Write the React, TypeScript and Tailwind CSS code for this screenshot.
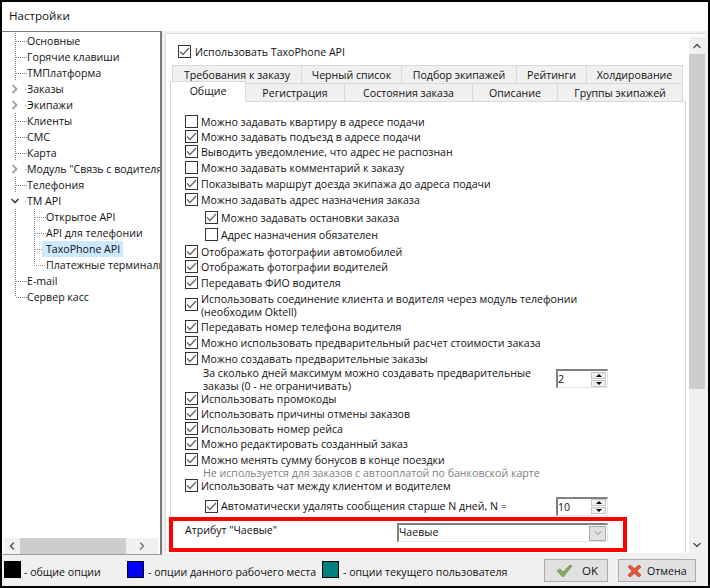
import { ChevronDown, ChevronLeft, ChevronRight, ChevronUp } from "lucide-react";
import type { ReactNode } from "react";

type TreeItem = {
  label: string;
  level?: number;
  arrow?: "right" | "down";
  selected?: boolean;
  last?: boolean;
};

const treeItems: TreeItem[] = [
  { label: "Основные" },
  { label: "Горячие клавиши" },
  { label: "ТМПлатформа" },
  { label: "Заказы", arrow: "right" },
  { label: "Экипажи", arrow: "right" },
  { label: "Клиенты" },
  { label: "СМС" },
  { label: "Карта" },
  { label: 'Модуль "Связь с водителями"', arrow: "right" },
  { label: "Телефония" },
  { label: "TM API", arrow: "down" },
  { label: "Открытое API", level: 1 },
  { label: "API для телефонии", level: 1 },
  { label: "TaxoPhone API", level: 1, selected: true },
  { label: "Платежные терминалы", level: 1, last: true },
  { label: "E-mail" },
  { label: "Сервер касс", last: true },
];

const tabsTop = [
  { label: "Требования к заказу", className: "w-[130px]" },
  { label: "Черный список", className: "w-[100px]" },
  { label: "Подбор экипажей", className: "w-[115px]" },
  { label: "Рейтинги", className: "w-[70px]" },
  { label: "Холдирование", className: "w-[96px]" },
];

const tabsBottom = [
  { label: "Регистрация", className: "w-[99px]" },
  { label: "Состояния заказа", className: "w-[128px]" },
  { label: "Описание", className: "w-[85px]" },
  { label: "Группы экипажей", className: "w-[125px]" },
];

function Check({ checked = true }: { checked?: boolean }) {
  return (
    <span className="flex size-[13px] shrink-0 items-center justify-center border border-[#333333] bg-white">
      {checked && (
        <svg width="11" height="11" viewBox="0 0 11 11" fill="none">
          <path d="M1 5.5 4 8.5 10 2" stroke="#666666" strokeWidth="1.3" />
        </svg>
      )}
    </span>
  );
}

function Row({
  children,
  className,
  checked = true,
  indent = false,
}: {
  children: ReactNode;
  className: string;
  checked?: boolean;
  indent?: boolean;
}) {
  return (
    <div className={`flex items-center gap-[3px] ${indent ? "pl-[34px]" : "pl-[14px]"} ${className}`}>
      <Check checked={checked} />
      <span className="mt-[2px] leading-[13px]">{children}</span>
    </div>
  );
}

function Spinner({ value }: { value: string }) {
  return (
    <div className="flex h-[19px] w-[52px] items-center justify-between border-t-2 border-r border-b border-l-2 border-t-[#808080] border-r-[#e4e4e4] border-b-[#e4e4e4] border-l-[#808080] bg-white pr-[1px] leading-[16px]">
      <span>{value}</span>
      <div className="flex flex-col gap-[1px]">
        <span className="flex h-[7px] w-[15px] items-center justify-center border border-[#c4c4c4] bg-[#f0f0f0]">
          <span className="border-x-[3px] border-b-[3px] border-x-transparent border-b-black" />
        </span>
        <span className="flex h-[7px] w-[15px] items-center justify-center border border-[#c4c4c4] bg-[#f0f0f0]">
          <span className="border-x-[3px] border-t-[3px] border-x-transparent border-t-black" />
        </span>
      </div>
    </div>
  );
}

function TreeLines({ item }: { item: TreeItem }) {
  const level = item.level ?? 0;
  const dotted = { stroke: "#8a8a8a", strokeDasharray: "1 1", fill: "none" };

  return (
    <svg width={level ? 44 : 25} height="16" className="shrink-0">
      {!item.arrow && !(level === 0 && item.last) && <path d="M13.5 0V16" {...dotted} />}
      {level === 0 && item.last && <path d="M13.5 0V8" {...dotted} />}
      {item.arrow === "right" && (
        <path d="M10.5 4 14.5 8 10.5 12" fill="none" stroke="#a6a6a6" strokeWidth="2" />
      )}
      {item.arrow === "down" && (
        <path d="M9.5 6 13 9.5 16.5 6" fill="none" stroke="#404040" strokeWidth="1.6" />
      )}
      {level === 0 && <path d={item.arrow ? "M23 8.5H25" : "M14 8.5H25"} {...dotted} />}
      {level === 1 && <path d={item.last ? "M32.5 0V8.5H44" : "M32.5 0V16M33 8.5H44"} {...dotted} />}
    </svg>
  );
}

function Tree() {
  return (
    <div className="flex w-[160px] shrink-0 flex-col border-t border-r-2 border-b border-t-[#7a7a7a] border-r-[#7a7a7a] border-b-[#a0a0a0] bg-white">
      <div className="flex min-h-0 flex-1 flex-col overflow-hidden pt-[1px]">
        {treeItems.map((item) => (
          <div className="flex h-4 shrink-0 items-center whitespace-nowrap" key={item.label}>
            <TreeLines item={item} />
            <span className={item.selected ? "-ml-[4px] flex h-4 items-center bg-[#cce8ff] pt-[2px] pr-[3px] pl-[4px]" : "mt-[2px]"}>
              {item.label}
            </span>
          </div>
        ))}
      </div>
      <div className="mx-[2px] flex h-[16px] shrink-0 items-center justify-between bg-[#f0f0f0] text-[#555555]">
        <span className="flex w-[16px] justify-center">
          <ChevronLeft size={12} strokeWidth={3} />
        </span>
        <span className="h-full w-[108px] bg-[#cdcdcd]" />
        <span className="flex w-[32px] justify-center">
          <ChevronRight size={12} strokeWidth={3} className="text-[#777777]" />
        </span>
      </div>
    </div>
  );
}

function Tabs() {
  const tabClass =
    "flex h-[18px] items-center justify-center border-t border-r border-[#d9d9d9] bg-[#f0f0f0] first:border-l";

  return (
    <div className="relative z-10 mt-[7px] h-[36px] shrink-0">
      <div className="ml-[6px] flex">
        {tabsTop.map((tab) => (
          <div className={`${tabClass} pt-[2px] ${tab.className}`} key={tab.label}>
            {tab.label}
          </div>
        ))}
      </div>
      <div className="ml-[4px] flex">
        <div className="relative -mt-[2px] flex h-[21px] w-[76px] items-start justify-center border-x border-t border-[#d9d9d9] bg-white pt-[2px]">
          Общие
        </div>
        {tabsBottom.map((tab) => (
          <div className={`${tabClass} pt-[3px] ${tab.className}`} key={tab.label}>
            {tab.label}
          </div>
        ))}
      </div>
    </div>
  );
}

function TabPage() {
  return (
    <div className="relative ml-[4px] flex w-[516px] min-h-0 flex-1 flex-col border-x border-t border-[#d9d9d9] bg-white pt-[11px]">
      <Row className="h-4" checked={false}>Можно задавать квартиру в адресе подачи</Row>
      <Row className="h-[15px]">Можно задавать подъезд в адресе подачи</Row>
      <Row className="h-[15px]">Выводить уведомление, что адрес не распознан</Row>
      <Row className="h-4" checked={false}>Можно задавать комментарий к заказу</Row>
      <Row className="h-4">Показывать маршрут доезда экипажа до адреса подачи</Row>
      <Row className="h-4">Можно задавать адрес назначения заказа</Row>
      <Row className="mt-[2px] h-4" indent>Можно задавать остановки заказа</Row>
      <Row className="mt-[1px] h-4" indent checked={false}>Адрес назначения обязателен</Row>
      <Row className="mt-[1px] h-4">Отображать фотографии автомобилей</Row>
      <Row className="h-[15px]">Отображать фотографии водителей</Row>
      <Row className="h-4">Передавать ФИО водителя</Row>
      <Row className="h-[29px]">
        Использовать соединение клиента и водителя через модуль телефонии
        <br />
        (необходим Oktell)
      </Row>
      <Row className="h-[15px]">Передавать номер телефона водителя</Row>
      <Row className="h-4">Можно использовать предварительный расчет стоимости заказа</Row>
      <Row className="h-4">Можно создавать предварительные заказы</Row>
      <div className="flex h-[25px] items-center justify-between pr-[77px] pl-[32px] leading-[13px]">
        <span className="mt-[2px]">
          За сколько дней максимум можно создавать предварительные
          <br />
          заказы (0 - не ограничивать)
        </span>
        <Spinner value="2" />
      </div>
      <Row className="h-[15px]">Использовать промокоды</Row>
      <Row className="h-[15px]">Использовать причины отмены заказов</Row>
      <Row className="h-[14px]">Использовать номер рейса</Row>
      <Row className="h-4">Можно редактировать созданный заказ</Row>
      <Row className="h-4">Можно менять сумму бонусов в конце поездки</Row>
      <div className="h-[10px] pt-[1px] pl-[32px] leading-[10px] text-[#808080]">
        Не используется для заказов с автооплатой по банковской карте
      </div>
      <Row className="h-4">Использовать чат между клиентом и водителем</Row>
      <div className="mt-[5px] flex h-4 items-center justify-between pr-[77px] pl-[34px]">
        <span className="flex h-[13px] items-center gap-[3px]">
          <Check />
          <span className="mt-[2px]">Автоматически удалять сообщения старше N дней, N =</span>
        </span>
        <Spinner value="10" />
      </div>
      <div className="mt-[9px] flex h-[19px] items-center justify-between pr-[77px] pl-[14px]">
        <span className="-mt-[3px]">Атрибут "Чаевые"</span>
        <div className="flex h-[19px] w-[211px] items-center justify-between border-t-2 border-r border-b border-l-2 border-t-[#808080] border-r-[#e4e4e4] border-b-[#e4e4e4] border-l-[#808080] bg-white pr-[1px]">
          <span>Чаевые</span>
          <span className="flex h-[15px] w-[17px] items-center justify-center border border-[#adadad] bg-[#e1e1e1] text-[#666666]">
            <ChevronDown size={12} strokeWidth={1.5} />
          </span>
        </div>
      </div>
      {/* annotation drawn on top of the screenshot */}
      <div className="absolute top-[415px] -left-[2px] h-[35px] w-[458px] border-4 border-[#fe0000]" />
    </div>
  );
}

function Settings() {
  return (
    <div className="ml-[3px] mt-[2px] flex h-[520px] w-[540px] border-t border-l border-[#d9d9d9] bg-white">
      <div className="flex w-[523px] shrink-0 flex-col">
        <div className="pt-[11px] pl-[12px]">
          <div className="flex h-[13px] items-center gap-[4px] leading-[13px]">
            <Check />
            <span className="mt-[2px]">Использовать TaxoPhone API</span>
          </div>
        </div>
        <Tabs />
        <TabPage />
      </div>
      <div className="mt-[3px] flex w-[16px] shrink-0 flex-col bg-[#f0f0f0] text-[#555555]">
        <span className="flex h-[17px] shrink-0 items-center justify-center">
          <ChevronUp size={12} strokeWidth={3} />
        </span>
        <span className="h-[335px] bg-[#cdcdcd]" />
        <span className="mt-auto flex h-[17px] shrink-0 items-center justify-center">
          <ChevronDown size={12} strokeWidth={3} />
        </span>
      </div>
    </div>
  );
}

function Swatch({ className }: { className: string }) {
  return <span className={`mt-[6px] size-[17px] shrink-0 border border-black ${className}`} />;
}

export default function App() {
  return (
    <div className="flex h-[588px] w-[710px] flex-col border-2 border-black bg-[#f0f0f0] font-['Open_Sans','Noto_Sans',sans-serif] text-[10.6px] text-[#111111]">
      <div className="flex h-[29px] shrink-0 items-center bg-white pb-[2px] pl-[7px] text-[11.6px]">
        Настройки
      </div>
      <div className="flex h-[524px] shrink-0">
        <Tree />
        <Settings />
      </div>
      <div className="flex min-h-0 flex-1 items-start whitespace-nowrap pl-[2px] leading-[14px]">
        <Swatch className="bg-black" />
        <span className="mt-[10px] ml-[3px] w-[103px]">- общие опции</span>
        <Swatch className="bg-[#0000ff]" />
        <span className="mt-[10px] ml-[4px] w-[174px]">- опции данного рабочего места</span>
        <Swatch className="bg-[#008080]" />
        <span className="mt-[10px] ml-[4px] w-[201px]">- опции текущего пользователя</span>
        <button className="mt-[4px] flex h-[23px] w-[64px] items-center gap-[9px] border border-[#adadad] bg-[#e1e1e1] pl-[11px] text-[11.5px]" type="button">
          <svg width="17" height="14" viewBox="0 0 17 14">
            <path d="M1 7 4 5 7 8 14 1 16 2 7 13Z" fill="#86ad5c" stroke="#5f8a3c" strokeWidth="0.7" />
          </svg>
          OK
        </button>
        <button className="mt-[4px] ml-[10px] flex h-[23px] w-[78px] items-center gap-[5px] border border-[#adadad] bg-[#e1e1e1] pl-[8px]" type="button">
          <svg width="15" height="14" viewBox="0 0 15 14">
            <path d="M1 3 3 1 7.5 4.5 12 1 14 3 10 7 14 11 12 13 7.5 9.5 3 13 1 11 5 7Z" fill="#e0563f" stroke="#b9472f" strokeWidth="0.7" />
          </svg>
          Отмена
        </button>
      </div>
    </div>
  );
}
